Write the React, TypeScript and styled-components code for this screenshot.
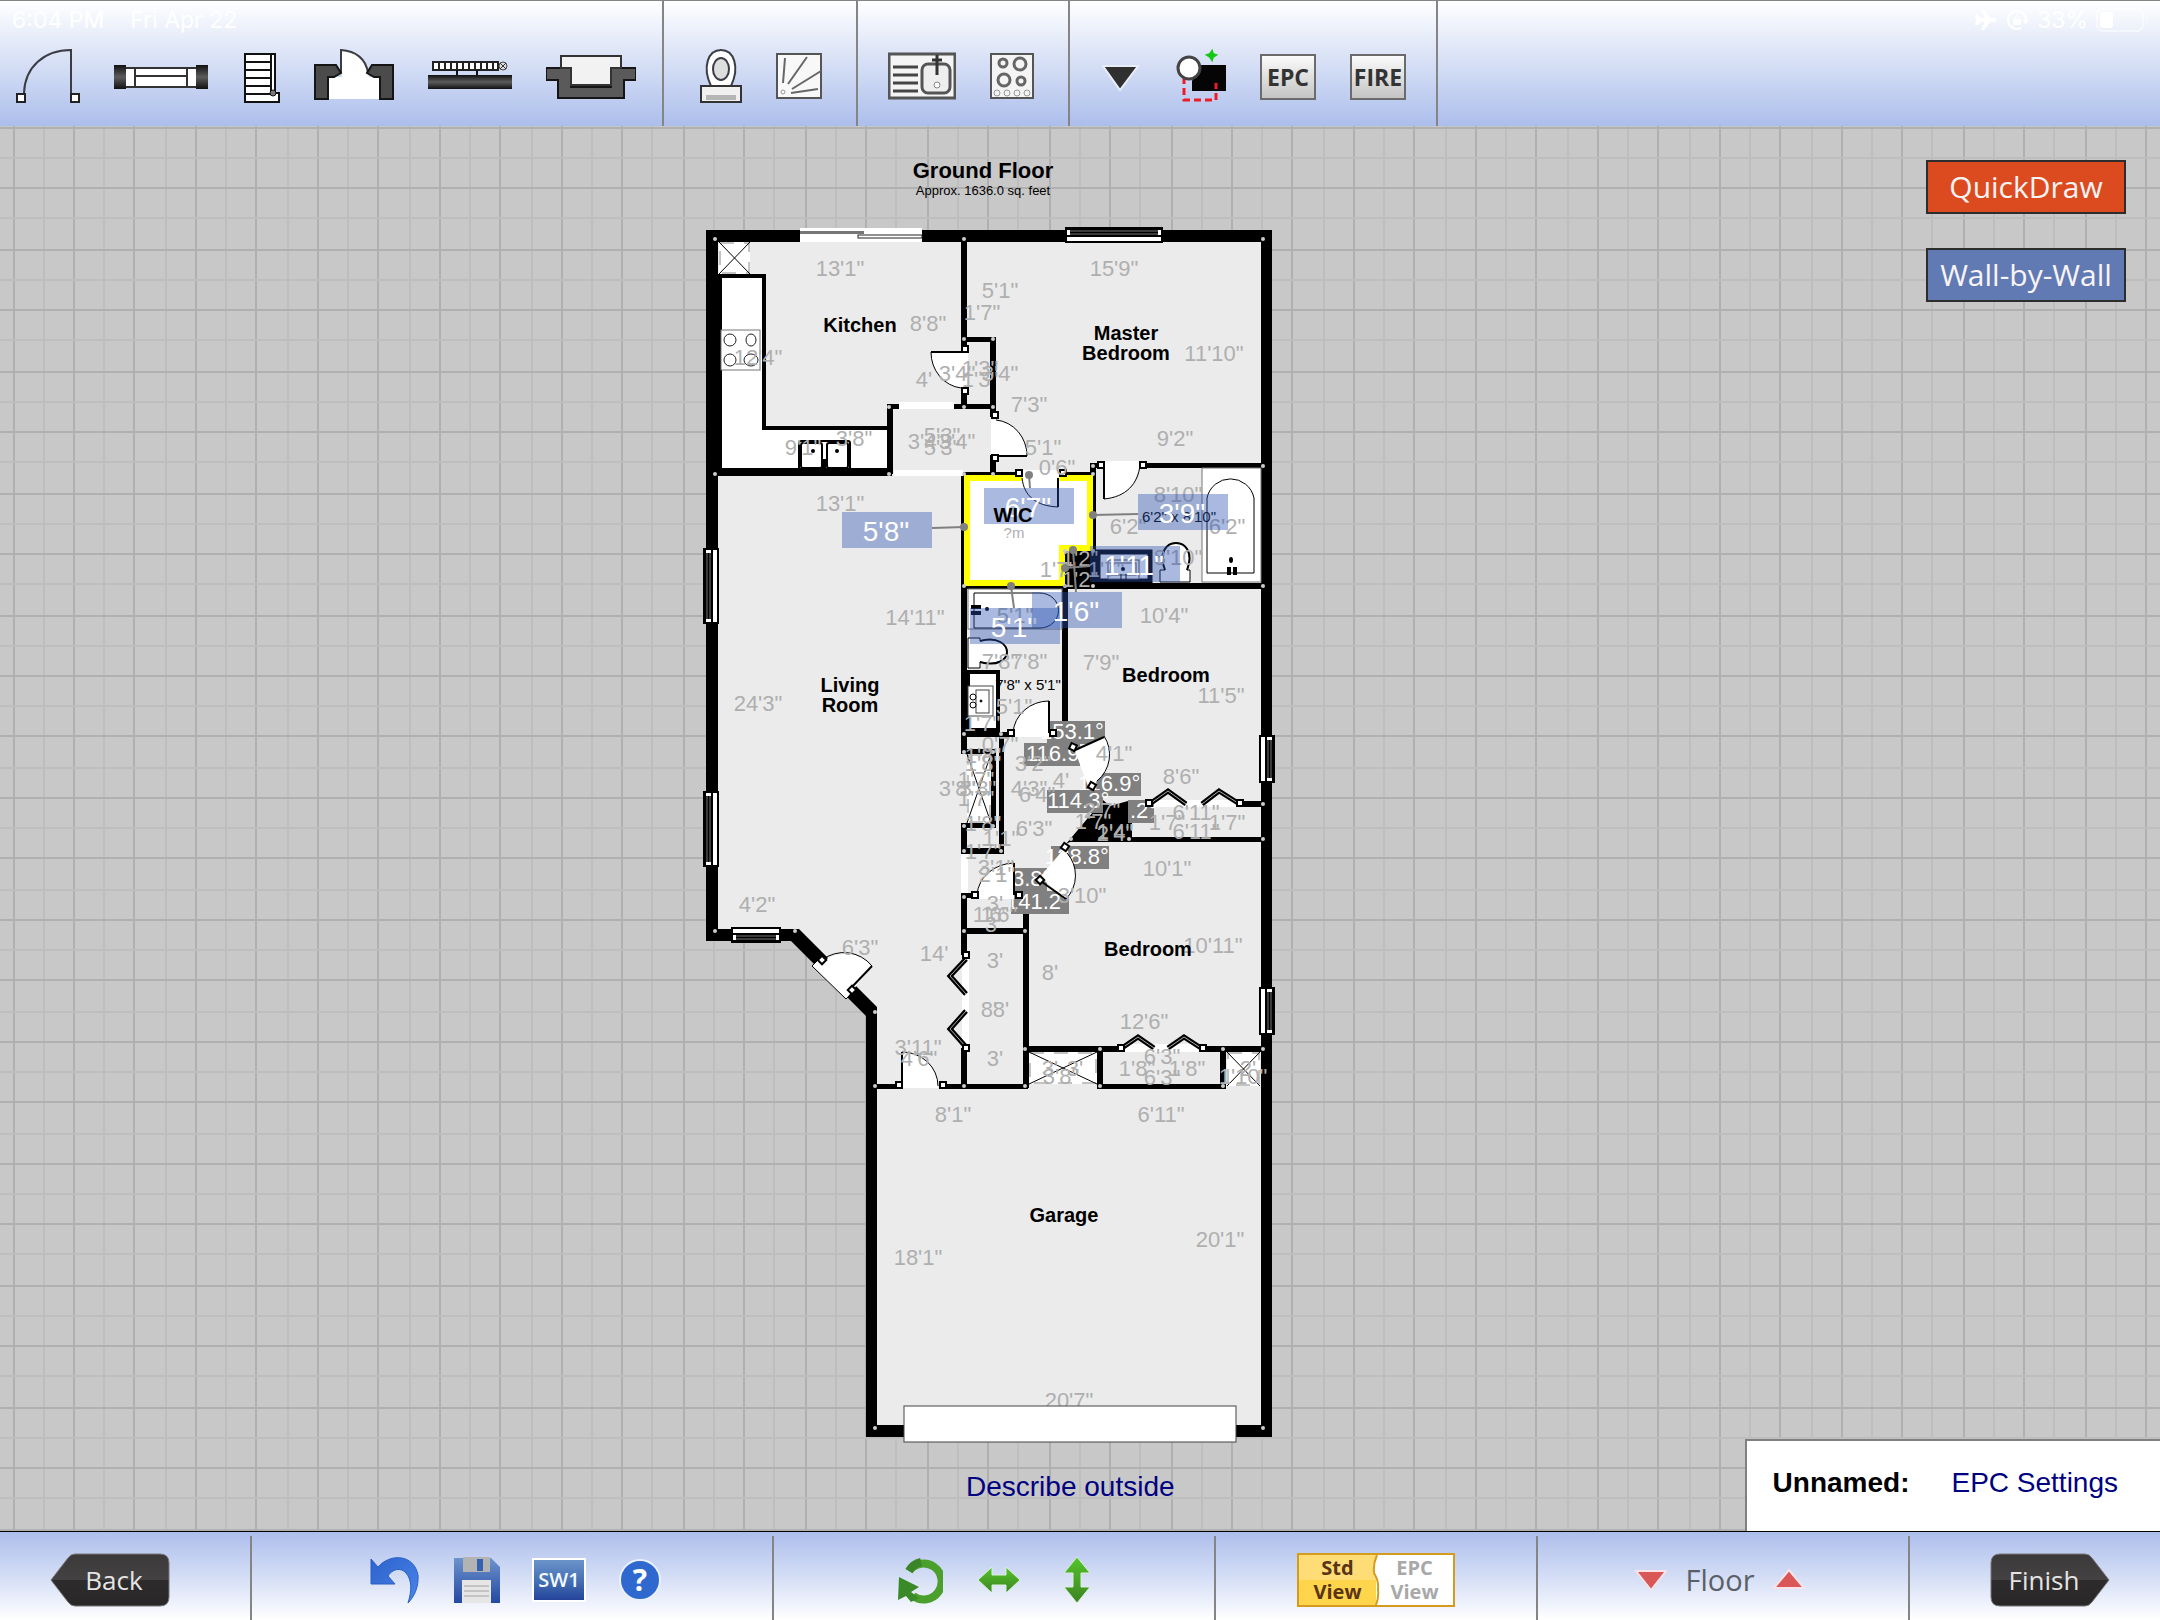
import React from "react";
import styled, { createGlobalStyle } from "styled-components";

const SANS = '"Liberation Sans", Arial, Helvetica, sans-serif';
const HUMAN = '"Open Sans", "Noto Sans", sans-serif';

const GlobalStyle = createGlobalStyle`
  * { box-sizing: border-box; }
  html, body { margin: 0; padding: 0; }
  body { font-family: ${SANS}; background: #c8c8c8; color: #000; }
  button { font: inherit; color: inherit; cursor: pointer; }
`;

const Page = styled.div`
  display: flex;
  flex-direction: column;
  height: 100vh;
`;

/* ---------- top bar ---------- */

const TopBar = styled.header`
  position: relative;
  display: flex;
  flex: none;
  height: 126px;
  border-top: 1px solid #858585;
  background: linear-gradient(#ffffff, #d6dff5 50%, #acbeec);
`;

const StatusBar = styled.div`
  position: absolute;
  inset: 4px 10px auto 12px;
  display: flex;
  align-items: center;
  justify-content: space-between;
  height: 30px;
  font: 23px/30px Inter, Roboto, sans-serif;
  color: #fff;
  pointer-events: none;
`;

const StatusGroup = styled.div<{ $gap: number }>`
  display: flex;
  align-items: center;
  gap: ${(p) => p.$gap}px;
`;

const ToolGroup = styled.div<{ $start: number; $end: number }>`
  display: flex;
  align-items: center;
  gap: 34px;
  padding: 26px ${(p) => p.$end}px 0 ${(p) => p.$start}px;
  border-right: 2px solid #858585;
`;

const IconButton = styled.button`
  display: flex;
  flex: none;
  padding: 0;
  border: 0;
  background: none;
`;

const Badge = styled.button`
  display: flex;
  align-items: center;
  justify-content: center;
  width: 56px;
  height: 46px;
  padding: 0;
  border: 2px solid #6b6b6b;
  background: linear-gradient(#fbfbfb, #c4c4c4);
  font: 700 23px/30px ${HUMAN};
  color: #333;
`;

/* ---------- canvas ---------- */

const Canvas = styled.main`
  position: relative;
  flex: 1;
  min-height: 0;
  overflow: hidden;
  background: #c8c8c8;
`;

const Drawing = styled.svg`
  position: absolute;
  inset: 0;
  width: 100%;
  height: 100%;
  font-family: ${SANS};
`;

const ModeButtons = styled.div`
  position: absolute;
  top: 34px;
  right: 34px;
  display: flex;
  flex-direction: column;
  gap: 34px;
`;

const ModeButton = styled.button<{ $bg: string }>`
  width: 200px;
  height: 54px;
  padding: 0;
  border: 2px solid #2d2d2d;
  background: ${(p) => p.$bg};
  font: 30px/40px ${HUMAN};
  color: #f8f4f4;
  white-space: nowrap;
`;

const OutsideButton = styled.button`
  position: absolute;
  left: 966px;
  top: 1345px;
  padding: 0;
  border: 0;
  background: none;
  font: 28px/32px ${SANS};
  color: #000080;
  white-space: nowrap;
`;

const InfoPanel = styled.aside`
  position: absolute;
  right: 0;
  bottom: 0;
  display: flex;
  gap: 42px;
  padding: 26px 42px 32px 26px;
  border: solid #808080;
  border-width: 2px 0 0 2px;
  background: #fff;
  font: 28px/32px ${SANS};
  white-space: nowrap;
`;

const EpcLink = styled.a`
  color: #000080;
  text-decoration: none;
`;

/* ---------- bottom bar ---------- */

const BottomBar = styled.footer`
  display: grid;
  grid-template-columns: 252fr 522fr 442fr 322fr 372fr 250fr;
  flex: none;
  height: 89px;
  border-top: 1px solid #000;
  background: linear-gradient(#adbeec, #d3ddf5 50%, #ffffff);
`;

const BarSection = styled.section<{ $gap?: number; $align?: string; $start?: number; $end?: number }>`
  display: flex;
  align-items: center;
  justify-content: ${(p) => p.$align ?? "center"};
  gap: ${(p) => p.$gap ?? 32}px;
  margin-top: 4px;
  padding: 4px ${(p) => p.$end ?? 0}px 0 ${(p) => p.$start ?? 0}px;
  border-right: 2px solid #858585;
  &:last-child { border-right: 0; }
`;

const SwButton = styled.button`
  width: 54px;
  height: 44px;
  padding: 0;
  border: 2px solid #fff;
  background: linear-gradient(#6b93c9, #4672b6 50%, #24449a);
  font: 600 20px/30px ${HUMAN};
  color: #f4f8ff;
`;

const ViewSwitch = styled.div`
  position: relative;
  display: flex;
  width: 158px;
  height: 54px;
  border: 2px solid #d59b1d;
  background: #fff;
`;

const ViewButton = styled.button<{ $on?: boolean }>`
  flex: 1;
  padding: 0;
  border: 0;
  background: ${(p) => (p.$on ? "linear-gradient(#fedd76 50%, #ffd54c 50%)" : "#fff")};
  font: 700 20px/24px ${HUMAN};
  color: ${(p) => (p.$on ? "#5a3414" : "#a8a8a8")};
  span { display: block; }
`;

const Wave = styled.svg`
  position: absolute;
  left: 70px;
  top: 0;
`;

const FloorLabel = styled.span`
  margin: 0 -14px;
  font: 29px/40px ${HUMAN};
  color: #5b6068;
`;

/* ---------- toolbar icons (shared 60px tall strip) ---------- */

function Tool({ name, x, w, children }: { name: string; x: number; w: number; children: React.ReactNode }) {
  return (
    <IconButton aria-label={name} title={name}>
      <svg width={w} height={60} viewBox={`${x} 46 ${w} 60`}>{children}</svg>
    </IconButton>
  );
}

const INK = "#3a3d44";

const OpeningTools = () => (
  <ToolGroup $start={16} $end={26}>
    <Tool name="Door" x={16} w={64}>
      <path d="M24 92C25 66 44 49 71 49V92" fill="none" stroke={INK} strokeWidth="2" />
      <rect x="17" y="93" width="8" height="8" fill="#fff" stroke="#222" strokeWidth="2" />
      <rect x="71" y="93" width="8" height="8" fill="#fff" stroke="#222" strokeWidth="2" />
    </Tool>
    <Tool name="Window" x={114} w={96}>
      <defs>
        <linearGradient id="wall" x1="0" x2="0" y1="0" y2="1">
          <stop offset="0" stopColor="#111" /><stop offset=".5" stopColor="#5c5c5c" /><stop offset="1" stopColor="#111" />
        </linearGradient>
      </defs>
      <rect x="124" y="67" width="74" height="19" fill="#fff" stroke="#333" strokeWidth="2" />
      <path d="M135 67V86M187 67V86M135 75H187" stroke="#333" strokeWidth="2" fill="none" />
      <rect x="114" y="64" width="12" height="24" fill="url(#wall)" />
      <rect x="196" y="64" width="12" height="24" fill="url(#wall)" />
    </Tool>
    <Tool name="Stairs" x={244} w={36}>
      <path d="M245 53H275V92H279V101H245Z" fill="#fff" stroke="#111" strokeWidth="2" />
      <path d="M245 61H271M245 69H271M245 77H271M245 85H271M245 93H276" stroke="#111" strokeWidth="2" />
      <path d="M271 53V93" stroke="#111" strokeWidth="2" />
      <circle cx="273" cy="92" r="3" fill="#777" stroke="#111" />
    </Tool>
    <Tool name="Opening with door" x={314} w={80}>
      <path d="M327 98V76H342L341 49C356 50 366 58 368 72L369 76H381V98Z" fill="#fff" />
      <path d="M341 72V49C356 50 366 58 368 72" fill="none" stroke={INK} strokeWidth="2" />
      <path d="M315 98V64H336L341 72L334 76H328V98Z" fill="#4b4b4b" stroke="#151515" strokeWidth="2" />
      <path d="M393 98V64H372L367 72L374 76H380V98Z" fill="#4b4b4b" stroke="#151515" strokeWidth="2" />
    </Tool>
    <Tool name="Radiator" x={428} w={84}>
      <rect x="433" y="61" width="65" height="8" fill="#fff" stroke="#222" strokeWidth="2" />
      <path d="M439 61V69M445 61V69M451 61V69M457 61V69M463 61V69M469 61V69M475 61V69M481 61V69M487 61V69M493 61V69" stroke="#222" strokeWidth="2" />
      <circle cx="503" cy="65" r="4" fill="#ddd" stroke="#444" />
      <path d="M500 62L506 68M506 62L500 68" stroke="#333" />
      <path d="M457 69V75M477 69V75" stroke="#111" strokeWidth="2" />
      <rect x="428" y="74" width="84" height="14" fill="url(#wall)" />
    </Tool>
    <Tool name="Fireplace" x={546} w={90}>
      <path d="M546 67H571V86H611V67H636V79H624V97H558V79H546Z" fill="#5a5a5a" stroke="#151515" strokeWidth="2" />
      <path d="M561 55H621V67H611V84H571V67H561Z" fill="#f2f2f2" stroke="#333" strokeWidth="2" />
    </Tool>
  </ToolGroup>
);

const BathTools = () => (
  <ToolGroup $start={36} $end={34}>
    <Tool name="Toilet" x={700} w={42}>
      <path d="M711 85C702 66 708 49 721 49S740 66 731 85Z" fill="#fff" stroke={INK} strokeWidth="2" />
      <ellipse cx="721" cy="68" rx="8" ry="11" fill="#ddd" stroke={INK} strokeWidth="2" />
      <rect x="701" y="85" width="40" height="16" fill="#f0f0f0" stroke="#333" strokeWidth="2" />
      <rect x="706" y="94" width="30" height="5" fill="#b5b5b5" />
    </Tool>
    <Tool name="Shower" x={776} w={46}>
      <rect x="777" y="53" width="44" height="44" fill="#f8f8f8" stroke="#555" strokeWidth="2" />
      <path d="M783 82L785 57M788 83L807 56M792 88L821 70M791 92L818 88" stroke="#666" strokeWidth="2" />
      <circle cx="783" cy="91" r="2" fill="none" stroke="#999" />
    </Tool>
  </ToolGroup>
);

const KitchenTools = () => (
  <ToolGroup $start={30} $end={34}>
    <Tool name="Sink" x={888} w={68}>
      <rect x="889" y="53" width="66" height="44" fill="#f4f4f4" stroke="#555" strokeWidth="3" />
      <path d="M893 66H918M893 74H918M893 82H918M893 90H918" stroke="#444" strokeWidth="3" />
      <rect x="922" y="63" width="28" height="29" rx="6" fill="#eee" stroke="#555" strokeWidth="3" />
      <path d="M937 54V74M932 59H942" stroke="#333" strokeWidth="3" />
      <circle cx="937" cy="84" r="3" fill="#fff" stroke="#888" />
    </Tool>
    <Tool name="Hob" x={990} w={44}>
      <rect x="991" y="53" width="42" height="44" fill="#f4f4f4" stroke="#555" strokeWidth="2" />
      <g fill="none" stroke="#666" strokeWidth="3">
        <circle cx="1003" cy="62" r="4" /><circle cx="1020" cy="63" r="6" />
        <circle cx="1004" cy="79" r="6" /><circle cx="1021" cy="80" r="4" />
      </g>
      <g fill="none" stroke="#999"><circle cx="997" cy="92" r="3" /><circle cx="1007" cy="92" r="3" /><circle cx="1017" cy="92" r="3" /><circle cx="1027" cy="92" r="3" /></g>
    </Tool>
  </ToolGroup>
);

const ExtraTools = () => (
  <ToolGroup $start={32} $end={30}>
    <Tool name="More" x={1102} w={40}>
      <path d="M1103 65H1138L1120 89Z" fill="#303030" stroke="#e8edf8" strokeWidth="2" />
    </Tool>
    <Tool name="Add shape" x={1176} w={50}>
      <path d="M1200 64H1226V90H1192V80Z" fill="#050505" />
      <path d="M1184 76V99H1216V82" fill="none" stroke="#ee1c24" strokeWidth="3" strokeDasharray="7 4" />
      <circle cx="1189" cy="67" r="11" fill="#fff" stroke="#444" strokeWidth="3" />
      <path d="M1212 50L1213 53L1216 54L1213 56L1212 59L1210 56L1207 54L1210 53Z" fill="#12c812" stroke="#12c812" strokeWidth="2" />
    </Tool>
    <Badge>EPC</Badge>
    <Badge>FIRE</Badge>
  </ToolGroup>
);

const StatusIcons = () => (
  <svg width="54" height="24" viewBox="0 0 54 24" aria-hidden="true">
    <path d="M0 7L3 7L6 10L10 10L6 2L9 2L15 10L20 10Q23 12 20 14L15 14L9 22L6 22L10 14L6 14L3 17L0 17L1 12Z" fill="#fff" />
    <path d="M51 12A9 9 0 1 0 46 20" fill="none" stroke="#fff" strokeWidth="2" />
    <path d="M47 12L54 12L51 16Z" fill="#fff" />
    <rect x="38" y="11" width="8" height="6" fill="#fff" />
    <path d="M40 11V9Q42 6 44 9V11" fill="none" stroke="#fff" />
  </svg>
);

const Battery = () => (
  <svg width="54" height="24" viewBox="0 0 54 24" aria-hidden="true">
    <rect x="1" y="1" width="46" height="22" rx="6" fill="none" stroke="#fff" strokeWidth="2" opacity=".5" />
    <rect x="4" y="4" width="13" height="16" rx="3" fill="#fff" />
    <path d="M50 9Q53 12 50 15Z" fill="#fff" opacity=".5" />
  </svg>
);

/* ---------- floor plan ---------- */

const PITCH = 60.95;
const snap = (v: number) => 2 * Math.floor(v / 2) + 1;

function GridLines() {
  const steps = Array.from({ length: 140 }, (_, i) => i / 2);
  const tone = (k: number) => (Number.isInteger(k) ? "#b0b0b0" : "#bebebe");
  return (
    <g>
      {steps.map((k) => <rect key={`v${k}`} x={snap(12 + PITCH * k)} y={0} width={2} height="100%" fill={tone(k)} />)}
      {steps.map((k) => <rect key={`h${k}`} x={0} y={snap(126.4 + PITCH * k) - 126} width="100%" height={2} fill={tone(k)} />)}
    </g>
  );
}

type Label = [string, number, number];

const DIMENSIONS: Label[] = [
  [`13'1"`, 840, 276], [`8'8"`, 928, 331], [`12'4"`, 758, 365], [`4'`, 924, 387],
  [`3'4"`, 957, 381], [`1'3"`, 980, 376], [`1'3"`, 980, 387], [`3'4"`, 1000, 381],
  [`3'8"`, 854, 446], [`9'1"`, 803, 455], [`5'3"`, 942, 443], [`5'3"`, 942, 455],
  [`3'4"`, 926, 449], [`3'4"`, 957, 449],
  [`5'1"`, 1000, 298], [`1'7"`, 982, 320], [`15'9"`, 1114, 276], [`11'10"`, 1214, 361],
  [`7'3"`, 1029, 412], [`9'2"`, 1175, 446], [`5'1"`, 1043, 455], [`0'6"`, 1057, 475],
  [`8'10"`, 1178, 502], [`6'2"`, 1128, 534], [`6'2"`, 1227, 534], [`8'10"`, 1178, 565],
  [`1'7"`, 1058, 577], [`1'7"`, 1106, 577], [`1'2"`, 1080, 566], [`1'2"`, 1080, 587],
  [`13'1"`, 840, 511], [`14'11"`, 915, 625], [`24'3"`, 758, 711], [`4'2"`, 757, 912],
  [`6'3"`, 860, 955], [`14'`, 934, 961], [`3'`, 995, 968], [`8'`, 989, 1017], [`8'`, 1001, 1017],
  [`3'`, 995, 1066], [`3'11"`, 918, 1055], [`4'6"`, 919, 1066], [`8'1"`, 953, 1122],
  [`10'4"`, 1164, 623], [`7'9"`, 1101, 670], [`11'5"`, 1221, 703], [`8'6"`, 1181, 784],
  [`4'1"`, 1114, 761], [`3'2"`, 1033, 771], [`4'`, 1061, 788], [`4'3"`, 1029, 796],
  [`6'4"`, 1037, 802], [`6'3"`, 1034, 836], [`7'8"`, 1000, 669], [`7'8"`, 1029, 669],
  [`5'1"`, 1014, 714], [`1'7"`, 982, 731], [`0'7"`, 1000, 752], [`3'8"`, 957, 796],
  [`3'8"`, 978, 796], [`1'8"`, 983, 763], [`1'8"`, 983, 771], [`1'7"`, 976, 787],
  [`1'7"`, 976, 806], [`1'8"`, 983, 831], [`1'1"`, 1001, 846], [`1'7"`, 983, 859],
  [`5'1"`, 1015, 623], [`2'7"`, 1102, 818], [`1'7"`, 1093, 829], [`1'4"`, 1115, 839],
  [`2'4"`, 1115, 841], [`6'11"`, 1196, 820], [`6'11"`, 1196, 839], [`1'7"`, 1167, 830],
  [`1'7"`, 1227, 830], [`3'10"`, 1082, 903], [`10'1"`, 1167, 876], [`10'11"`, 1213, 953],
  [`8'`, 1050, 980], [`12'6"`, 1144, 1029], [`6'3"`, 1162, 1064], [`6'3"`, 1162, 1085],
  [`1'8"`, 1137, 1076], [`1'8"`, 1187, 1076], [`3'8"`, 1061, 1084], [`3'`, 1050, 1076],
  [`3'`, 1075, 1076], [`1'10"`, 1243, 1084], [`2'`, 1248, 1076], [`3'1"`, 996, 875],
  [`2'1"`, 997, 882], [`3'`, 995, 911], [`1'6"`, 991, 922], [`1'6"`, 999, 922], [`3'`, 993, 932],
  [`18'1"`, 918, 1265], [`20'1"`, 1220, 1247], [`20'7"`, 1069, 1408], [`6'11"`, 1161, 1122],
];

const ROOMS: Label[] = [
  ["Kitchen", 860, 332], ["Master", 1126, 340], ["Bedroom", 1126, 360], ["WIC", 1013, 522],
  ["Living", 850, 692], ["Room", 850, 712], ["Bedroom", 1166, 682], ["Bedroom", 1148, 956],
  ["Garage", 1064, 1222],
];

/* x, y, width, height of straight interior wall runs */
const WALLS: [number, number, number, number][] = [
  [961, 240, 6, 102], [961, 342, 6, 8], [961, 394, 6, 15], [887, 404, 109, 5], [961, 337, 35, 5],
  [990, 337, 6, 72], [887, 404, 6, 70], [716, 468, 176, 8], [990, 409, 6, 8], [990, 455, 6, 20],
  [961, 472, 56, 4], [1063, 472, 33, 4], [961, 472, 6, 117], [1090, 463, 6, 126], [1090, 463, 9, 5],
  [1147, 463, 116, 5], [961, 583, 301, 6], [1065, 550, 35, 38],
  [961, 589, 6, 165], [1062, 589, 6, 132], [961, 732, 48, 5], [999, 732, 5, 122],
  [961, 749, 34, 5], [991, 750, 5, 78], [961, 823, 35, 5], [961, 823, 6, 31], [961, 848, 43, 6],
  [961, 893, 6, 62], [961, 893, 12, 5], [961, 1048, 6, 40], [961, 928, 66, 6], [1023, 893, 6, 195],
  [1023, 1046, 96, 6], [1206, 1046, 56, 6], [870, 1084, 26, 5], [946, 1084, 82, 5],
  [1097, 1046, 6, 43], [1097, 1084, 129, 5], [1220, 1046, 6, 43],
  [1070, 837, 192, 5], [1242, 801, 20, 6],
];

const NODES: [number, number][] = [
  [715, 239], [964, 239], [1263, 239], [964, 339], [993, 339], [889, 407], [964, 407], [993, 407],
  [715, 474], [889, 474], [964, 474], [993, 474], [1093, 474], [1093, 466], [1263, 466],
  [964, 586], [1065, 586], [1093, 586], [1263, 586], [1065, 551], [1093, 551], [964, 734], [1001, 734],
  [964, 752], [993, 752], [964, 826], [993, 826], [964, 851], [1001, 851], [1071, 839], [1129, 839],
  [1263, 804], [1263, 839], [964, 897], [964, 931], [1025, 931], [1025, 1049], [1100, 1049],
  [1223, 1049], [1263, 1049], [964, 1086], [1025, 1086], [1100, 1086], [1223, 1086], [875, 1086],
  [875, 1012], [795, 931], [715, 931], [875, 1428], [1263, 1428],
];

/* door frame posts: x, y, rotation */
const POSTS: [number, number, number][] = [
  [965, 349, 0], [965, 391, 0], [995, 415, 0], [995, 458, 0], [1019, 473, 0], [1063, 473, 0],
  [1101, 465, 0], [1143, 465, 0], [1011, 733, 0], [1053, 733, 0], [975, 895, 0], [1019, 895, 0],
  [899, 1085, 0], [943, 1085, 0], [966, 955, 0], [966, 1048, 0], [1121, 1048, 0], [1203, 1048, 0],
  [1149, 803, 0], [1240, 803, 0], [1073, 747, 25], [1092, 786, 30], [1065, 847, 35], [1040, 880, 45],
  [822, 960, 45], [852, 990, 45],
];

/* door swings: filled wedge, thin swing arc, heavier leaf line */
const DOORS: [string, string, string][] = [
  ["M968 352H931A34 36 0 0 0 961 388H968Z", "M931 352A34 36 0 0 0 961 388", "M931 352H966"],
  ["M991 420H996A34 36 0 0 1 1027 456H991Z", "M996 420A34 36 0 0 1 1027 456", "M995 456H1027"],
  ["M1104 461H1140C1138 484 1126 497 1104 499Z", "M1140 465C1138 484 1126 497 1104 499", "M1104 468V499"],
  ["M1013 737V733A36 34 0 0 1 1049 701V737Z", "M1013 733A36 34 0 0 1 1049 701", "M1049 701V733"],
  ["M977 899V895A38 34 0 0 1 1014 863V899Z", "M977 895A38 34 0 0 1 1014 863", "M1014 863V895"],
  ["M902 1088V1052A36 34 0 0 1 938 1088Z", "M902 1052A36 34 0 0 1 938 1086", "M902 1052V1084"],
  ["M1075 751L1104 736A34 34 0 0 1 1097 781L1088 786Z", "M1104 736A34 34 0 0 1 1097 781", "M1073 751L1104 737"],
  ["M1063 850L1040 877L1066 899A34 34 0 0 0 1067 853Z", "M1066 899A34 34 0 0 0 1067 853", "M1042 882L1066 899"],
  ["M812 966L846 999L872 966A36 36 0 0 0 822 962L818 960Z", "M822 956L812 966L846 999L856 989M872 966A36 36 0 0 0 822 960", "M850 989L872 966"],
];

const BIFOLDS = [
  "M966 959L950 976L966 994", "M966 1011L950 1029L966 1047",
  "M1122 1048L1138 1037L1154 1048", "M1168 1048L1184 1037L1201 1048",
  "M1151 803L1168 791L1186 804", "M1202 804L1219 791L1238 803",
];

const OPENINGS: [number, number, number, number][] = [
  [899, 402, 55, 7], [894, 470, 69, 6], [961, 854, 7, 39], [962, 958, 7, 86],
  [1125, 1044, 75, 8], [1152, 800, 86, 7], [962, 352, 6, 36],
];

const ANGLES: { text: string; x: number; y: number; w: number; tx: number }[] = [
  { text: "153.1°", x: 1047, y: 721, w: 58, tx: 1040 },
  { text: "116.9°", x: 1024, y: 743, w: 56, tx: 1026 },
  { text: "116.9°", x: 1085, y: 773, w: 56, tx: 1078 },
  { text: "114.3°", x: 1047, y: 790, w: 56, tx: 1047 },
  { text: ".2°", x: 1128, y: 800, w: 26, tx: 1130 },
  { text: "128.8°", x: 1051, y: 846, w: 58, tx: 1045 },
  { text: "3.8°", x: 1014, y: 868, w: 33, tx: 1012 },
  { text: "141.2°", x: 1011, y: 891, w: 58, tx: 1006 },
];

/* selected room measurements: text, box x, box y, anchor dot, line end */
const MEASURES: [string, number, number, number, number, number, number][] = [
  [`6'7"`, 984, 488, 1029, 475, 1030, 488],
  [`5'8"`, 842, 512, 964, 527, 932, 528],
  [`3'9"`, 1138, 494, 1093, 515, 1138, 514],
  [`1'11"`, 1090, 546, 1065, 568, 1090, 566],
  [`5'1"`, 970, 608, 1011, 586, 1014, 608],
  [`1'6"`, 1032, 592, 1073, 550, 1076, 592],
];

/* Window drawn along x, with the room side at the bottom. */
function WallWindow({ x, y, length, turn = 0 }: { x: number; y: number; length: number; turn?: number }) {
  const h = length / 2;
  return (
    <g transform={`translate(${x} ${y}) rotate(${turn})`}>
      <rect x={-h} y={-8} width={length} height={16} fill="#000" />
      <rect x={-h + 2} y={2} width={length - 4} height={4} fill="#fff" />
      <path d={`M${-h + 5} -4H${h - 5}M${-h + 5} -1H${h - 5}`} stroke="#777" />
      <rect x={-h + 2} y={-5} width={3} height={5} fill="#fff" />
      <rect x={h - 5} y={-5} width={3} height={5} fill="#fff" />
    </g>
  );
}

function CrossBox({ x, y, w, h }: { x: number; y: number; w: number; h: number }) {
  return (
    <g>
      <rect x={x} y={y} width={w} height={h} fill="#fff" />
      <rect x={x + 1} y={y + 1} width={w - 2} height={h - 2} fill="none" stroke="#888" strokeWidth="1" strokeDasharray="14 10" />
      <path d={`M${x} ${y}L${x + w} ${y + h}M${x + w} ${y}L${x} ${y + h}`} stroke="#000" strokeWidth="1" />
    </g>
  );
}

function KitchenFittings() {
  return (
    <g>
      <path d="M720 276H764V428H890V470H720Z" fill="#fff" stroke="#000" strokeWidth="4" />
      <CrossBox x={719} y={242} w={31} h={32} />
      <rect x="721" y="330" width="39" height="40" fill="#fff" stroke="#777" />
      <g fill="#fff" stroke="#222">
        <circle cx="730" cy="340" r="6" /><ellipse cx="751" cy="340" rx="5" ry="6" />
        <circle cx="730" cy="360" r="6" /><ellipse cx="751" cy="360" rx="7" ry="6" />
      </g>
      <rect x="799" y="441" width="51" height="29" rx="2" fill="#fff" stroke="#000" strokeWidth="2" />
      <rect x="801" y="443" width="21" height="25" rx="2" fill="#fff" stroke="#000" strokeWidth="2" />
      <rect x="827" y="443" width="21" height="25" rx="2" fill="#fff" stroke="#000" strokeWidth="2" />
      <path d="M824 459V470" stroke="#000" strokeWidth="4" />
      <circle cx="813" cy="451" r="2" /><circle cx="837" cy="451" r="2" />
    </g>
  );
}

function BathFittings() {
  return (
    <g fill="#fff" stroke="#000">
      <rect x="1202" y="468" width="59" height="114" stroke="#777" />
      <path d="M1207 573V498A24 24 0 0 1 1254 498V573Z" strokeWidth="1" />
      <ellipse cx="1231" cy="560" rx="2" ry="3" fill="#000" stroke="none" />
      <path d="M1229 567V575M1235 567V575" strokeWidth="4" />
      <rect x="1098" y="552" width="52" height="29" strokeWidth="5" />
      <rect x="1108" y="560" width="31" height="19" stroke="#555" />
      <rect x="1111" y="563" width="25" height="12" stroke="#555" />
      <circle cx="1123" cy="569" r="2" fill="#000" stroke="none" />
      <path d="M1121 574V581M1126 574V581" />
      <path d="M1160 582V570H1165C1158 552 1167 543 1176 543S1194 552 1187 570H1190V582Z" strokeWidth="1" />
      <path d="M1165 570C1158 552 1167 543 1176 543S1194 552 1187 570" fill="none" strokeWidth="2" />

      <rect x="968" y="589" width="94" height="40" stroke="#777" />
      <path d="M974 593H1040A18 17 0 0 1 1040 628H974Z" strokeWidth="1" />
      <circle cx="987" cy="609" r="2" fill="#000" stroke="none" />
      <path d="M971 607H981M971 613H981" strokeWidth="4" />
      <path d="M968 638H980V641C998 636 1007 645 1007 652S998 667 980 662V668H968Z" />
      <path d="M980 641C998 636 1007 645 1007 652S998 667 980 662" fill="none" strokeWidth="2" />
      <rect x="968" y="672" width="30" height="58" strokeWidth="4" />
      <rect x="968" y="686" width="25" height="30" stroke="#444" />
      <rect x="976" y="690" width="13" height="23" stroke="#444" />
      <circle cx="981" cy="701" r="1" fill="#000" />
      <circle cx="973" cy="697" r="3" /><circle cx="973" cy="705" r="3" />
    </g>
  );
}

function FloorPlan() {
  return (
    <g transform="translate(0 -126)">
      <path d="M712 236H1266V1431H871V1012L792 934H712Z" fill="#ebebeb" />
      <path
        fillRule="evenodd"
        d="M706 230H1272V1437H866V1016L791 941H706ZM718 242V929H799L877 1007V1425H1261V242Z"
      />
      <KitchenFittings />
      {WALLS.map(([x, y, w, h], i) => <rect key={i} x={x} y={y} width={w} height={h} />)}
      <path d="M1066 844L1103 800L1110 806L1128 801V822H1132V842H1070Z" />
      <BathFittings />
      <CrossBox x={967} y={754} w={24} h={69} />
      <CrossBox x={1029} y={1052} w={68} h={32} />
      <CrossBox x={1227} y={1052} w={33} h={34} />
      <path d="M967 478H1090V548H1062V583H967Z" fill="#fff" stroke="#ff0" strokeWidth="6" />
      {OPENINGS.map(([x, y, w, h], i) => <rect key={i} x={x} y={y} width={w} height={h} fill="#fff" />)}
      <path d="M1022 470H1059V507C1036 506 1024 496 1022 478Z" fill="#fff" />
      <path d="M1022 478C1024 496 1036 506 1058 507" fill="none" stroke="#000" />
      <path d="M1058 507V478" fill="none" stroke="#000" strokeWidth="2" />

      <rect x="800" y="228" width="122" height="14" fill="#fff" />
      <rect x="800" y="231" width="64" height="3" fill="#777" />
      <rect x="858" y="235" width="64" height="3" fill="#fff" stroke="#222" />
      <WallWindow x={1114} y={235} length={98} />
      <WallWindow x={711} y={586} length={76} turn={-90} />
      <WallWindow x={711} y={829} length={76} turn={-90} />
      <WallWindow x={1267} y={759} length={48} turn={90} />
      <WallWindow x={1267} y={1011} length={48} turn={90} />
      <WallWindow x={756} y={935} length={50} turn={180} />

      <g fontSize="22">
        {ANGLES.map((a, i) => (
          <g key={i}>
            <rect x={a.x} y={a.y} width={a.w} height={23} fill="#808080" />
            <text x={a.tx} y={a.y + 18} fill="#fff">{a.text}</text>
          </g>
        ))}
      </g>

      {DOORS.map(([wedge, arc, leaf], i) => (
        <g key={i} fill="none" stroke="#000">
          <path d={wedge} fill="#fff" stroke="none" />
          <path d={arc} />
          <path d={leaf} strokeWidth="2" />
        </g>
      ))}
      {BIFOLDS.map((d) => (
        <g key={d} fill="none">
          <path d={d} stroke="#000" strokeWidth="5" />
          <path d={d} stroke="#aaa" strokeWidth="1" />
        </g>
      ))}
      {POSTS.map(([x, y, r], i) => (
        <rect key={i} x={x - 3} y={y - 3} width={6} height={6} fill="#fff" stroke="#000" strokeWidth="2" transform={`rotate(${r} ${x} ${y})`} />
      ))}
      {NODES.map(([x, y], i) => <circle key={i} cx={x} cy={y} r={2} fill="#ccc" />)}

      <g fontSize="22" fill="#afafaf" textAnchor="middle">
        {DIMENSIONS.map(([t, x, y], i) => <text key={i} x={x} y={y}>{t}</text>)}
      </g>
      <text x="1014" y="538" fontSize="15" fill="#afafaf" textAnchor="middle">?m</text>
      <rect x="904" y="1406" width="332" height="36" fill="#fff" stroke="#444" />

      <g fontSize="15" textAnchor="middle">
        <text x="1179" y="522">6'2" x 8'10"</text>
        <text x="1028" y="690">7'8" x 5'1"</text>
      </g>

      {MEASURES.map(([t, x, y, dx, dy, lx, ly]) => (
        <g key={t + x}>
          <path d={`M${dx} ${dy}L${lx} ${ly}`} stroke="#808080" strokeWidth="2" />
          <circle cx={dx} cy={dy} r="4" fill="#808080" />
          <rect x={x} y={y} width="90" height="36" fill="rgba(40,80,175,.4)" />
          <text x={x + 44} y={y + 29} fontSize="28" fill="#fff" textAnchor="middle">{t}</text>
        </g>
      ))}

      <g fontSize="20" fontWeight="bold" textAnchor="middle">
        {ROOMS.map(([t, x, y], i) => <text key={i} x={x} y={y}>{t}</text>)}
      </g>
      <text x="983" y="178" fontSize="22" fontWeight="bold" textAnchor="middle">Ground Floor</text>
      <text x="983" y="195" fontSize="13" textAnchor="middle">Approx. 1636.0 sq. feet</text>
    </g>
  );
}

/* ---------- bottom bar pieces ---------- */

function NavButton({ label, forward }: { label: string; forward?: boolean }) {
  return (
    <IconButton>
      <svg width="120" height="54" viewBox="0 0 120 54">
        <defs>
          <linearGradient id="nav" x1="0" x2="0" y1="0" y2="1">
            <stop offset="0" stopColor="#3b3939" /><stop offset=".5" stopColor="#434141" />
            <stop offset=".5" stopColor="#2d2b2b" /><stop offset="1" stopColor="#292727" />
          </linearGradient>
        </defs>
        <path
          d="M1 27L18 5Q21 1 25 1H110Q119 1 119 10V44Q119 53 110 53H25Q21 53 18 49Z"
          transform={forward ? "translate(120 0) scale(-1 1)" : undefined}
          fill="url(#nav)" stroke="#777" strokeWidth="1"
        />
        <text x={forward ? 54 : 64} y="37" fontSize="26" fontFamily={HUMAN} fill="#e4e4e4" textAnchor="middle">{label}</text>
      </svg>
    </IconButton>
  );
}

const Undo = () => (
  <IconButton aria-label="Undo">
    <svg width="52" height="48" viewBox="0 0 52 48">
      <defs><linearGradient id="undo" x1="0" x2="1" y1="0" y2="1"><stop offset="0" stopColor="#2c62cc" /><stop offset="1" stopColor="#4a86ea" /></linearGradient></defs>
      <path d="M1 3L8 11C20-3 44-2 48 19C49 31 44 41 38 47C42 34 42 24 36 17C31 11 22 13 18 20L25 28H1Z" fill="url(#undo)" stroke="#2a5fc8" />
    </svg>
  </IconButton>
);

const Save = () => (
  <IconButton aria-label="Save">
    <svg width="46" height="48" viewBox="0 0 46 48">
      <defs><linearGradient id="disk" x1="0" x2="0" y1="0" y2="1"><stop offset="0" stopColor="#6d93cd" /><stop offset="1" stopColor="#2348a0" /></linearGradient></defs>
      <path d="M0 2H37L46 11V47H0Z" fill="url(#disk)" />
      <rect x="9" y="1" width="27" height="15" fill="#b3b3b3" /><rect x="23" y="3" width="6" height="12" fill="#3562ae" />
      <rect x="8" y="24" width="29" height="23" fill="#e6e6e6" />
      <path d="M10 30H35M10 35H35M10 40H35" stroke="#c4c4c4" strokeWidth="2" />
    </svg>
  </IconButton>
);

const Help = () => (
  <IconButton aria-label="Help">
    <svg width="44" height="46" viewBox="0 0 44 46">
      <circle cx="22" cy="23" r="20" fill="#2f68cf" stroke="#e9f0ff" strokeWidth="2" />
      <text x="22" y="34" fontSize="30" fontWeight="bold" fontFamily={HUMAN} fill="#fff" textAnchor="middle">?</text>
    </svg>
  </IconButton>
);

const Rotate = () => (
  <IconButton aria-label="Rotate">
    <svg width="46" height="48" viewBox="0 0 46 48">
      <path d="M12 15A18 18 0 1 1 16 40" fill="none" stroke="#4b9f2c" strokeWidth="8" />
      <path d="M12 15A18 18 0 0 1 24 6" fill="none" stroke="#3a8528" strokeWidth="8" />
      <path d="M2 21L22 31L14 36L22 42L14 46L9 40L1 44Z" fill="#3a8a29" />
    </svg>
  </IconButton>
);

const ArrowDefs = () => (
  <defs><linearGradient id="leaf" x1="0" x2="0" y1="0" y2="1"><stop offset="0" stopColor="#55c42b" /><stop offset="1" stopColor="#3c8321" /></linearGradient></defs>
);

const FlipH = () => (
  <IconButton aria-label="Flip horizontally">
    <svg width="52" height="30" viewBox="0 0 52 30">
      <ArrowDefs />
      <path d="M1 15L15 2V10H29V2L43 15L29 28V20H15V28Z" fill="url(#leaf)" stroke="#d9f0d9" />
    </svg>
  </IconButton>
);

const FlipV = () => (
  <IconButton aria-label="Flip vertically">
    <svg width="28" height="48" viewBox="0 0 28 48">
      <path d="M14 1L27 17H18V31H27L14 47L1 31H10V17H1Z" fill="url(#leaf)" stroke="#d9f0d9" />
    </svg>
  </IconButton>
);

const FloorArrow = ({ up }: { up?: boolean }) => (
  <IconButton aria-label={up ? "Floor up" : "Floor down"}>
    <svg width="32" height="22" viewBox="0 0 32 22">
      <path d={up ? "M16 1L31 19H1Z" : "M16 21L31 2H1Z"} fill="#d95757" stroke="#f7e3e8" strokeWidth="2" />
    </svg>
  </IconButton>
);

export default function App() {
  return (
    <Page>
      <GlobalStyle />
      <TopBar>
        <OpeningTools />
        <BathTools />
        <KitchenTools />
        <ExtraTools />
        <StatusBar>
          <StatusGroup $gap={26}><span>6:04 PM</span><span>Fri Apr 22</span></StatusGroup>
          <StatusGroup $gap={8}><StatusIcons /><span>33%</span><Battery /></StatusGroup>
        </StatusBar>
      </TopBar>

      <Canvas>
        <Drawing aria-label="Ground floor plan">
          <GridLines />
          <FloorPlan />
        </Drawing>
        <ModeButtons>
          <ModeButton $bg="#dc4b20">QuickDraw</ModeButton>
          <ModeButton $bg="#627ab4">Wall-by-Wall</ModeButton>
        </ModeButtons>
        <OutsideButton>Describe outside</OutsideButton>
        <InfoPanel>
          <strong>Unnamed:</strong>
          <EpcLink href="#epc">EPC Settings</EpcLink>
        </InfoPanel>
      </Canvas>

      <BottomBar>
        <BarSection $align="flex-start" $start={50}><NavButton label="Back" /></BarSection>
        <BarSection $start={8}><Undo /><Save /><SwButton>SW1</SwButton><Help /></BarSection>
        <BarSection $gap={34}><Rotate /><FlipH /><FlipV /></BarSection>
        <BarSection><ViewSwitch>
            <ViewButton $on aria-pressed="true"><span>Std</span><span>View</span></ViewButton>
            <ViewButton aria-pressed="false"><span>EPC</span><span>View</span></ViewButton>
            <Wave width="16" height="50" viewBox="0 0 16 50" aria-hidden="true">
              <path d="M8 0Q4 9 5 18Q10 26 9 34Q10 42 7 50H16V0Z" fill="#fff" />
              <path d="M8 0Q4 9 5 18Q10 26 9 34Q10 42 7 50" fill="none" stroke="#d59b1d" strokeWidth="2" />
            </Wave>
          </ViewSwitch></BarSection>
        <BarSection $end={6}><FloorArrow /><FloorLabel>Floor</FloorLabel><FloorArrow up /></BarSection>
        <BarSection $align="flex-end" $end={50}><NavButton label="Finish" forward /></BarSection>
      </BottomBar>
    </Page>
  );
}
